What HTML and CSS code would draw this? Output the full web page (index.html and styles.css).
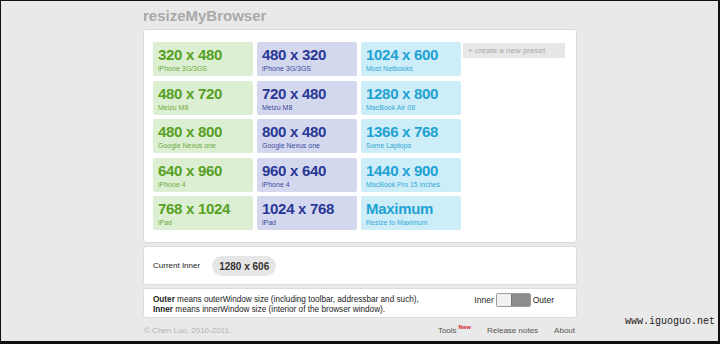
FILE: index.html
```html
<!DOCTYPE html>
<html lang="en">
  <head>
    <meta charset="UTF-8" />
    <meta name="viewport" content="width=device-width, initial-scale=1.0" />
    <title>resizeMyBrowser</title>
    <link rel="stylesheet" href="styles.css">
  </head>
  <body>
    <div class="frame">
      <div class="page">
        <h1 class="title">resizeMyBrowser</h1>

        <!-- presets -->
        <div class="panel presets">
          <div class="grid">
            <a class="tile green"><div class="size">320 x 480</div><div class="name">iPhone 3G/3GS</div></a>
            <a class="tile blue"><div class="size">480 x 320</div><div class="name">iPhone 3G/3GS</div></a>
            <a class="tile cyan"><div class="size">1024 x 600</div><div class="name">Most Netbooks</div></a>
            <a class="new-preset">+ create a new preset</a>

            <a class="tile green"><div class="size">480 x 720</div><div class="name">Meizu M8</div></a>
            <a class="tile blue"><div class="size">720 x 480</div><div class="name">Meizu M8</div></a>
            <a class="tile cyan"><div class="size">1280 x 800</div><div class="name">MacBook Air 08</div></a>
            <span></span>

            <a class="tile green"><div class="size">480 x 800</div><div class="name">Google Nexus one</div></a>
            <a class="tile blue"><div class="size">800 x 480</div><div class="name">Google Nexus one</div></a>
            <a class="tile cyan"><div class="size">1366 x 768</div><div class="name">Some Laptops</div></a>
            <span></span>

            <a class="tile green"><div class="size">640 x 960</div><div class="name">iPhone 4</div></a>
            <a class="tile blue"><div class="size">960 x 640</div><div class="name">iPhone 4</div></a>
            <a class="tile cyan"><div class="size">1440 x 900</div><div class="name">MacBook Pro 15 inches</div></a>
            <span></span>

            <a class="tile green"><div class="size">768 x 1024</div><div class="name">iPad</div></a>
            <a class="tile blue"><div class="size">1024 x 768</div><div class="name">iPad</div></a>
            <a class="tile cyan"><div class="size">Maximum</div><div class="name">Resize to Maximum</div></a>
            <span></span>
          </div>
        </div>

        <!-- current size -->
        <div class="panel current">
          <span class="current-label">Current Inner</span>
          <span class="current-size">1280 x 606</span>
        </div>

        <!-- info -->
        <div class="panel info">
          <p class="info-text">
            <b>Outer</b> means outerWindow size (including toolbar, addressbar and such),<br>
            <b>Inner</b> means innerWindow size (interior of the browser window).
          </p>
          <div class="switch">
            <span>Inner</span>
            <span class="switch-box"><span class="switch-off"></span><span class="switch-on"></span></span>
            <span>Outer</span>
          </div>
        </div>

        <div class="footer">
          <span class="copy">&copy; Chen Luo, 2010-2011.</span>
          <div class="links">
            <a>Tools<sup class="new">New</sup></a>
            <a>Release notes</a>
            <a>About</a>
          </div>
        </div>
      </div>
      <div class="watermark">www.iguoguo.net</div>
    </div>
  </body>
</html>
```

FILE: styles.css
```css
body {
  margin: 0;
  padding: 0;
  font-family: 'Liberation Sans', Arial, sans-serif;
}

.frame {
  position: relative;
  width: 720px;
  height: 344px;
  box-sizing: border-box;
  border: solid #111;
  border-width: 1px 2px 3px 1px;
  background-color: #e9e9e9;
  overflow: hidden;
}

.page {
  width: 434px;
  margin-left: 142px;
  padding-top: 6px;
}

.title {
  margin: 0 0 4px;
  font-size: 15px;
  line-height: 18px;
  font-weight: bold;
  color: #a9a9a9;
}

.panel {
  background-color: #fff;
  border: 1px solid #dcdcdc;
  border-radius: 3px;
  box-sizing: border-box;
}

.presets {
  padding: 12px 9px;
}

.grid {
  display: grid;
  grid-template-columns: repeat(4, 100px);
  grid-auto-rows: 34px;
  column-gap: 4px;
  row-gap: 4.5px;
}

.tile {
  display: block;
  box-sizing: border-box;
  padding: 5px 5px 0;
  border-radius: 2px;
}

.tile .size {
  font-size: 15px;
  line-height: 16px;
  font-weight: bold;
  letter-spacing: -0.3px;
}

.tile .name {
  margin-top: 1px;
  font-size: 7px;
  line-height: 9px;
}

.green {
  background-color: #ddefd3;
  color: #56a024;
}

.blue {
  background-color: #d4d8ee;
  color: #293795;
}

.cyan {
  background-color: #cdedf8;
  color: #1ea1d3;
}

.green .name {
  color: #6cab40;
}

.blue .name {
  color: #3c4b9c;
}

.cyan .name {
  color: #33a8d6;
}

.new-preset {
  align-self: start;
  margin-top: 1px;
  margin-left: -2px;
  height: 15px;
  padding-left: 5px;
  background-color: #e7e7e7;
  color: #a8a8a8;
  font-size: 8px;
  line-height: 15px;
}

.current {
  margin-top: 3px;
  height: 39px;
  padding: 0 9px;
  display: flex;
  align-items: center;
  gap: 12px;
}

.current-label {
  font-size: 8px;
  color: #222;
}

.current-size {
  height: 20px;
  padding: 0 7px;
  border-radius: 10px;
  background-color: #e6e6e6;
  font-size: 10px;
  line-height: 21px;
  font-weight: bold;
  color: #333;
}

.info {
  margin-top: 3px;
  height: 30px;
  padding: 6px 22px 2px 9px;
  display: flex;
  justify-content: space-between;
  align-items: flex-start;
}

.info-text {
  margin: 0;
  font-size: 8.2px;
  line-height: 10px;
  color: #222;
}

.switch {
  margin-top: -2px;
  display: flex;
  align-items: center;
  gap: 2px;
  font-size: 8.5px;
  color: #222;
}

.switch-box {
  display: flex;
  width: 35px;
  height: 14px;
  box-sizing: border-box;
  border: 1px solid #9a9a9a;
  border-radius: 2px;
  overflow: hidden;
}

.switch-off {
  flex: 1;
  background-color: #f2f2f2;
}

.switch-on {
  flex: 1.3;
  background-color: #8c8c8c;
  border-left: 1px solid #777;
}

.footer {
  display: flex;
  justify-content: space-between;
  padding: 8px 2px 0 1px;
  font-size: 8px;
  line-height: 10px;
}

.copy {
  color: #b2b2b2;
}

.links {
  display: flex;
  gap: 16px;
}

.links a {
  color: #555;
}

.new {
  margin-left: 2px;
  font-size: 6px;
  font-weight: bold;
  color: #d2232a;
  vertical-align: 4px;
  line-height: 0;
}

.watermark {
  position: absolute;
  left: 624px;
  top: 315px;
  font-family: 'Liberation Mono', monospace;
  font-size: 10px;
  line-height: 12px;
  color: #222;
}
```
